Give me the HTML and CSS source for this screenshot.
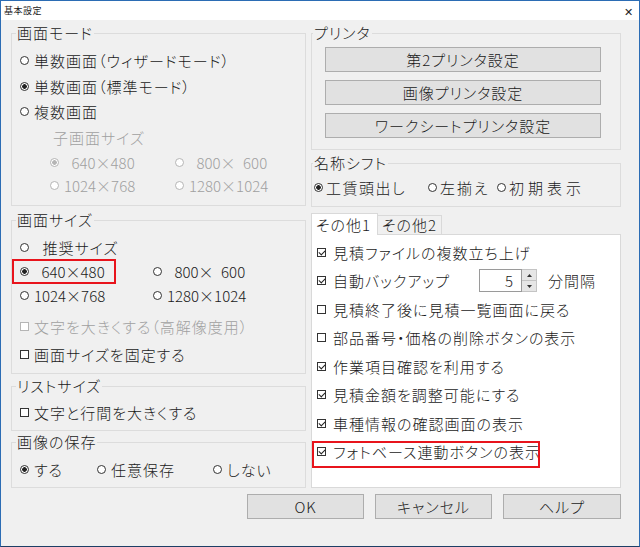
FILE: index.html
```html
<!DOCTYPE html>
<html lang="ja">
  <head>
    <meta charset="UTF-8" />
    <title>基本設定</title>
    <link rel="stylesheet" href="styles.css">
  </head>
  <body>
    <div class="dialog">
      <div class="dialog__title">
        <span class="dialog__caption">基本設定</span>
        <span class="dialog__close">✕</span>
      </div>

      <div class="dialog__body">
        <div class="col col--left">
          <fieldset class="group group--mode">
            <legend class="group__legend">画面モード</legend>
            <div class="opt opt--h26"><i class="radio"></i>単数画面（ウィザードモード）</div>
            <div class="opt opt--h26"><i class="radio radio--on"></i>単数画面（標準モード）</div>
            <div class="opt opt--h25"><i class="radio"></i>複数画面</div>
            <div class="opt opt--h26 opt--off opt--sublabel">子画面サイズ</div>
            <div class="sizes sizes--child">
              <div class="opt opt--off opt--num"><i class="radio radio--on"></i>&ensp;640×480</div>
              <div class="opt opt--off opt--num"><i class="radio"></i>&ensp;800×&ensp;600</div>
              <div class="opt opt--off opt--num"><i class="radio"></i>1024×768</div>
              <div class="opt opt--off opt--num"><i class="radio"></i>1280×1024</div>
            </div>
          </fieldset>

          <fieldset class="group group--size">
            <legend class="group__legend">画面サイズ</legend>
            <div class="opt opt--h24"><i class="radio"></i>&ensp;推奨サイズ</div>
            <div class="sizes sizes--main">
              <div class="opt opt--num"><span class="mark mark--size"><i class="radio radio--on"></i>&ensp;640×480</span></div>
              <div class="opt opt--num"><i class="radio"></i>&ensp;800×&ensp;600</div>
              <div class="opt opt--num"><i class="radio"></i>1024×768</div>
              <div class="opt opt--num"><i class="radio"></i>1280×1024</div>
            </div>
            <div class="opt opt--h28 opt--gap opt--off"><i class="check check--off"></i>文字を大きくする（高解像度用）</div>
            <div class="opt opt--h28"><i class="check"></i>画面サイズを固定する</div>
          </fieldset>

          <fieldset class="group group--list">
            <legend class="group__legend">リストサイズ</legend>
            <div class="opt opt--h24"><i class="check"></i>文字と行間を大きくする</div>
          </fieldset>

          <fieldset class="group group--image">
            <legend class="group__legend">画像の保存</legend>
            <div class="opt-row">
              <div class="opt opt--w77"><i class="radio radio--on"></i>する</div>
              <div class="opt opt--w116"><i class="radio"></i>任意保存</div>
              <div class="opt"><i class="radio"></i>しない</div>
            </div>
          </fieldset>
        </div>

        <div class="col col--right">
          <fieldset class="group group--printer">
            <legend class="group__legend">プリンタ</legend>
            <button class="btn btn--wide">第2プリンタ設定</button>
            <button class="btn btn--wide">画像プリンタ設定</button>
            <button class="btn btn--wide">ワークシートプリンタ設定</button>
          </fieldset>

          <fieldset class="group group--shift">
            <legend class="group__legend">名称シフト</legend>
            <div class="opt-row">
              <div class="opt opt--w114 opt--tight opt--ls15"><i class="radio radio--on"></i>工賃頭出し</div>
              <div class="opt opt--w69 opt--tight opt--ls2"><i class="radio"></i>左揃え</div>
              <div class="opt opt--tight opt--ls4"><i class="radio"></i>初期表示</div>
            </div>
          </fieldset>

          <div class="tabs">
            <span class="tabs__tab tabs__tab--active">その他1</span>
            <span class="tabs__tab">その他2</span>
          </div>
          <div class="panel">
            <div class="panel__row"><i class="check check--on"></i>見積ファイルの複数立ち上げ</div>
            <div class="panel__row">
              <span class="panel__label"><i class="check check--on"></i>自動バックアップ</span>
              <span class="spin">
                <span class="spin__value">5</span>
                <span class="spin__btns">
                  <span class="spin__btn"><svg width="5" height="3" viewBox="0 0 5 3"><path d="M0 3L2.5 0L5 3Z" fill="#333"/></svg></span>
                  <span class="spin__btn"><svg width="5" height="3" viewBox="0 0 5 3"><path d="M0 0L2.5 3L5 0Z" fill="#333"/></svg></span>
                </span>
              </span>
              <span class="panel__unit">分間隔</span>
            </div>
            <div class="panel__row"><i class="check"></i>見積終了後に見積一覧画面に戻る</div>
            <div class="panel__row"><i class="check"></i>部品番号・価格の削除ボタンの表示</div>
            <div class="panel__row"><i class="check check--on"></i>作業項目確認を利用する</div>
            <div class="panel__row"><i class="check check--on"></i>見積金額を調整可能にする</div>
            <div class="panel__row"><i class="check check--on"></i>車種情報の確認画面の表示</div>
            <div class="panel__row"><span class="mark mark--photo"><i class="check check--on"></i>フォトベース連動ボタンの表示</span></div>
          </div>
        </div>
      </div>

      <div class="dialog__footer">
        <button class="btn btn--foot">OK</button>
        <button class="btn btn--foot">キャンセル</button>
        <button class="btn btn--foot btn--help">ヘルプ</button>
      </div>
    </div>
  </body>
</html>
```

FILE: styles.css
```css
*{margin:0;padding:0;box-sizing:border-box;}
body{background:#fff;font-family:"Noto Sans CJK JP","Noto Sans",sans-serif;font-size:15px;font-weight:300;color:#1a1a1a;font-feature-settings:"palt";letter-spacing:1px;}

/* window frame */
.dialog{width:640px;height:547px;display:flex;flex-direction:column;background:#f0f0f0;border:1px solid #2b6cb4;border-bottom-color:#1d3f66;}
.dialog__title{height:19px;flex:none;display:flex;align-items:center;justify-content:space-between;background:#fff;padding:0 6px 0 3px;}
.dialog__caption{font-size:9px;font-weight:400;letter-spacing:.5px;line-height:10px;}
.dialog__close{font-size:11px;letter-spacing:0;color:#222;}
.dialog__body{display:flex;gap:5px;padding-left:10px;}
.dialog__footer{display:flex;justify-content:flex-end;gap:11px;margin-top:6px;padding-right:18px;}

.col{display:flex;flex-direction:column;}
.col--left{width:295px;}
.col--right{width:310px;}

/* group boxes */
.group{border:1px solid #dcdcdc;min-width:0;}
.group__legend{line-height:18px;padding:0 1px;}
.group--mode{margin-top:4px;padding:5px 8px 9px;}
.group--mode .group__legend,.group--size .group__legend,.group--list .group__legend,.group--image .group__legend{margin-left:-4px;}
.group--size{margin-top:5px;padding:6px 8px 5px;}
.group--list{margin-top:3px;padding:5px 8px 6px;}
.group--image{margin-top:2px;padding:6px 8px 6px;}
.group--printer{margin-top:4px;padding:5px 13px 11px;display:flex;flex-direction:column;gap:8px;}
.group--printer .group__legend{margin-left:-12px;}
.group--shift{margin-top:4px;padding:3px 2px 7px;}
.group--shift .group__legend{margin-left:-1px;}

/* options */
.opt{display:flex;align-items:center;gap:5px;height:24px;white-space:pre;}
.opt--h24{height:24px;}
.opt--h25{height:25px;}
.opt--h26{height:26px;}
.opt--h28{height:28px;}
.opt--gap{margin-top:5px;}
.opt--off{color:#a0a0a0;}
.opt--num{letter-spacing:0;}
.opt--sublabel{padding-left:33px;}
.opt--w77{width:77px;}
.opt--w116{width:116px;}
.opt--w114{width:114px;}
.opt--w69{width:69px;}
.opt--tight{gap:3px;}
.opt--ls15{letter-spacing:1.5px;}
.opt--ls2{letter-spacing:2px;}
.opt--ls4{letter-spacing:4px;}
.opt-row{display:flex;height:24px;}

.sizes{display:grid;}
.sizes--child{grid-template-columns:125px 1fr;grid-auto-rows:23px;margin-left:30px;}
.sizes--main{grid-template-columns:133px 1fr;grid-auto-rows:24px;}

.radio{flex:none;width:9px;height:9px;border:1px solid #333;border-radius:50%;background:#fff;}
.radio--on{background:radial-gradient(circle,#222 0 2px,#fff 2.6px);}
.opt--off .radio{border-color:#b5b5b5;}
.opt--off .radio--on{background:radial-gradient(circle,#b5b5b5 0 2px,#fff 2.6px);}

.check{flex:none;width:9px;height:9px;border:1px solid #333;background:#fff;display:block;}
.check--on::after{content:"";display:block;width:3px;height:5px;border:solid #222;border-width:0 1px 1px 0;transform:rotate(45deg);margin:0 0 0 2px;}
.check--off{border-color:#b5b5b5;}

/* annotation boxes */
.mark{display:flex;align-items:center;gap:5px;outline:2px solid #e8141c;}
.mark--size{height:21px;width:100px;margin-left:-6px;padding-left:6px;}
.mark--photo{height:23px;width:224px;margin-left:-3px;padding:0 0 5px 3px;margin-top:5px;gap:7px;}

/* buttons */
.btn{font:inherit;letter-spacing:1px;font-feature-settings:"palt";color:#1a1a1a;background:#e1e1e1;border:1px solid #adadad;height:25px;cursor:pointer;}
.btn--wide{width:276px;}
.btn--foot{width:117px;}
.btn--help{width:118px;}

/* tabs */
.tabs{display:flex;align-items:flex-end;height:21px;margin-top:6px;}
.tabs__tab{height:19px;padding:0 4px;line-height:18px;border:1px solid #d9d9d9;border-bottom:none;background:#f0f0f0;margin-left:-1px;}
.tabs__tab--active{height:22px;margin:0 0 -1px;padding:0 6px 0 4px;background:#fff;line-height:21px;position:relative;z-index:1;}
.panel{height:254px;background:#fff;border:1px solid #d9d9d9;padding:3px 0 0 5px;}
.panel__row{display:flex;align-items:center;gap:7px;height:28.5px;white-space:pre;}
.panel__label{display:flex;align-items:center;gap:7px;width:155px;}
.panel__unit{margin-left:4px;}

.spin{display:flex;height:23px;}
.spin__value{width:43px;height:23px;border:1px solid #9a9a9a;background:#fff;text-align:right;padding-right:7px;line-height:21px;}
.spin__btns{display:flex;flex-direction:column;width:15px;}
.spin__btn{flex:1;display:flex;align-items:center;justify-content:center;background:#e6e6e6;border:1px solid #c4c4c4;border-left:none;}
.spin__btn + .spin__btn{border-top:none;}
```
